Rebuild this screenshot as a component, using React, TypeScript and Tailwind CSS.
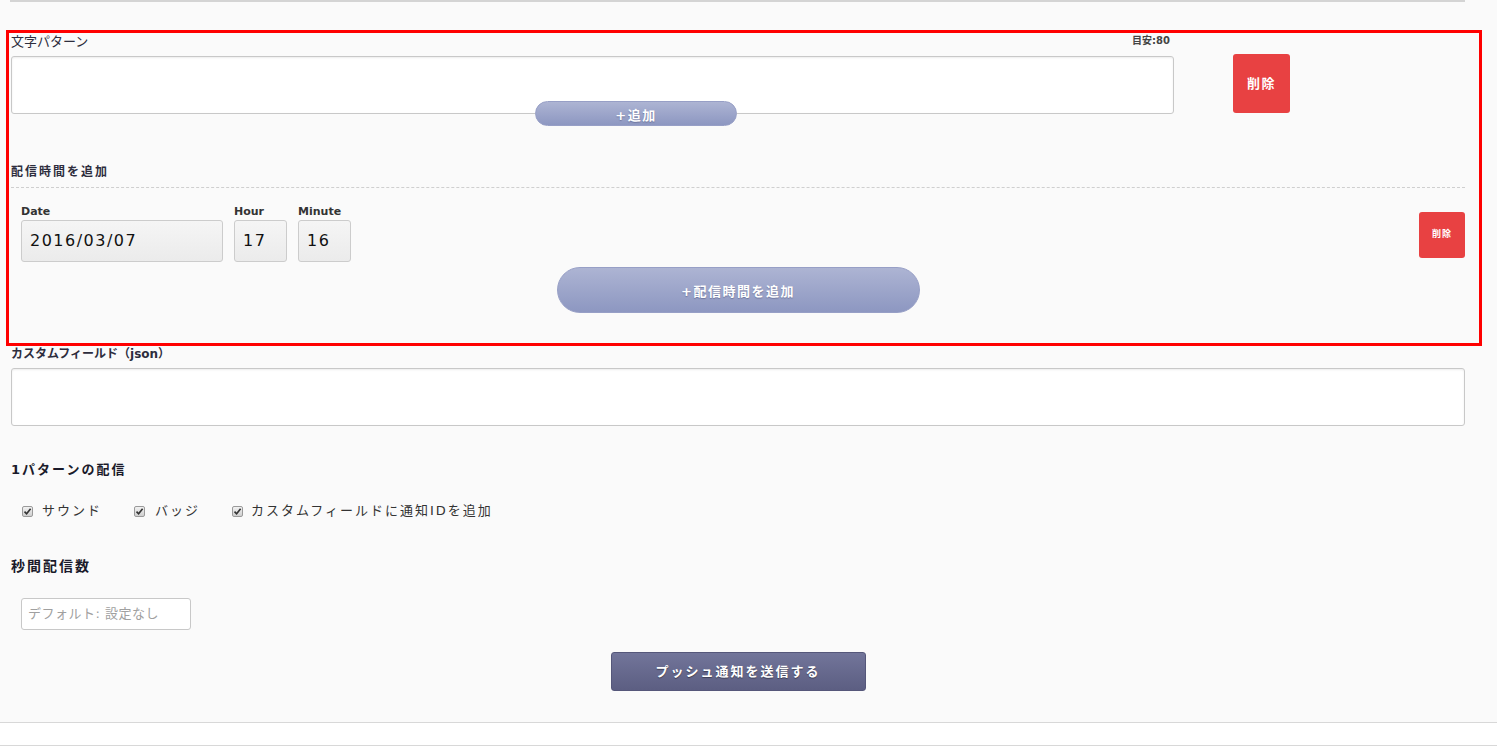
import React from "react";

const pill =
  "rounded-full border border-[#979fc6] bg-gradient-to-b from-[#adb4d3] to-[#8d97c1] text-white font-bold [text-shadow:0_1px_1px_rgba(40,40,80,0.35)]";

const Check: React.FC = () => (
  <span className="inline-flex w-[11px] h-[11px] rounded-[2px] border border-[#9a9a9a] bg-gradient-to-b from-[#f2f2f2] to-[#cfcfcf] items-center justify-center">
    <svg width="9" height="9" viewBox="0 0 9 9">
      <path d="M1.5 4.6 L3.6 6.8 L7.6 1.8" stroke="#333" strokeWidth="1.6" fill="none" />
    </svg>
  </span>
);

const TimeBox: React.FC<{ label: string; value: string; width: string }> = ({ label, value, width }) => (
  <div className="flex flex-col">
    <span className="text-[11px] leading-[14px] font-bold text-[#333]">{label}</span>
    <div
      className={`mt-[1px] h-[42px] ${width} flex items-center px-[8px] rounded-[3px] border border-[#cccccc] bg-gradient-to-b from-[#f5f5f5] to-[#ebebeb] text-[16px] tracking-[1.5px] text-[#111]`}
    >
      {value}
    </div>
  </div>
);

export default function App() {
  return (
    <div className="min-h-[747px] bg-[#fafafa] text-[#333] font-['DejaVu_Sans','Noto_Sans_CJK_JP',sans-serif] flex flex-col">
      <div className="ml-[10px] w-[1455px] h-[2px] bg-[#d4d4d4]" />

      {/* delivery pattern section */}
      <section className="mt-[28px] ml-[6px] w-[1476px] border-[3px] border-[#ff0000] pl-[2px] pr-[14px] pb-[30px] flex flex-col">
        <div className="w-[1163px] h-[17px] flex items-center justify-between pr-[4px]">
          <span className="text-[13px] leading-[17px] text-[#2d2d3d]">文字パターン</span>
          <span className="text-[10px] font-bold text-[#444] -mt-[3px]">目安:80</span>
        </div>
        <div className="mt-[6px] flex items-start">
          <div className="w-[1163px] h-[58px] bg-white border border-[#c8c8c8] rounded-[3px] shadow-[inset_0_1px_2px_rgba(0,0,0,0.08)]" />
          <button className="ml-[59px] -mt-[2px] w-[57px] h-[59px] rounded-[3px] bg-[#e84142] text-white text-[13px] font-bold tracking-[1.5px]">
            削除
          </button>
        </div>
        <button className={`relative z-10 -mt-[13px] ml-[524px] w-[202px] h-[25px] pt-[4px] text-[13px] tracking-[1.5px] ${pill}`}>
          +追加
        </button>

        <div className="mt-[38px] text-[12px] leading-[17px] font-bold tracking-[2px] text-[#2d2d3d]">配信時間を追加</div>
        <div className="mt-[6px] border-t border-dashed border-[#cfcfcf]" />

        <div className="mt-[17px] pl-[10px] flex items-start">
          <div className="flex gap-[11px]">
            <TimeBox label="Date" value="2016/03/07" width="w-[202px]" />
            <TimeBox label="Hour" value="17" width="w-[53px]" />
            <TimeBox label="Minute" value="16" width="w-[53px]" />
          </div>
          <button className="ml-auto mt-[7px] w-[46px] h-[46px] rounded-[3px] bg-[#e84142] text-white text-[9px] font-bold tracking-[1px]">
            削除
          </button>
        </div>
        <button className={`mt-[5px] mx-auto w-[363px] h-[46px] pt-[4px] text-[13px] tracking-[1.5px] ${pill}`}>
          +配信時間を追加
        </button>
      </section>

      <div className="ml-[11px] w-[1454px] flex flex-col">
        <div className="text-[12px] leading-[16px] font-bold text-[#2d2d3d]">カスタムフィールド（json）</div>
        <div className="mt-[6px] h-[58px] bg-white border border-[#c8c8c8] rounded-[3px] shadow-[inset_0_1px_2px_rgba(0,0,0,0.08)]" />

        <div className="mt-[35px] text-[13px] leading-[18px] font-bold tracking-[2px] text-[#1a1a2a]">1パターンの配信</div>
        <div className="mt-[24px] h-[16px] pl-[11px] flex items-center text-[13px] tracking-[2px] text-[#333]">
          <Check />
          <span className="ml-[9px]">サウンド</span>
          <span className="ml-[32px] flex items-center"><Check /></span>
          <span className="ml-[10px]">バッジ</span>
          <span className="ml-[32px] flex items-center"><Check /></span>
          <span className="ml-[8px]">カスタムフィールドに通知IDを追加</span>
        </div>

        <div className="mt-[39px] text-[14px] leading-[16px] font-bold tracking-[2px] text-[#1a1a2a]">秒間配信数</div>
        <div className="mt-[24px] ml-[10px] w-[170px] h-[32px] bg-white border border-[#c8c8c8] rounded-[3px] flex items-center px-[6px] text-[13px] tracking-[0.5px] text-[#a0a0a0]">
          デフォルト: 設定なし
        </div>

        <button className="mt-[22px] mx-auto w-[255px] h-[39px] rounded-[3px] border border-[#55577a] bg-gradient-to-b from-[#72759a] to-[#5c5e82] text-white text-[13px] font-bold tracking-[2px] [text-shadow:0_1px_1px_rgba(0,0,0,0.4)]">
          プッシュ通知を送信する
        </button>
      </div>

      <div className="mt-[31px] h-px bg-[#d8d8d8]" />
      <div className="h-[22px] bg-white" />
      <div className="h-px bg-[#d8d8d8]" />
      <div className="flex-1 bg-white" />
    </div>
  );
}
